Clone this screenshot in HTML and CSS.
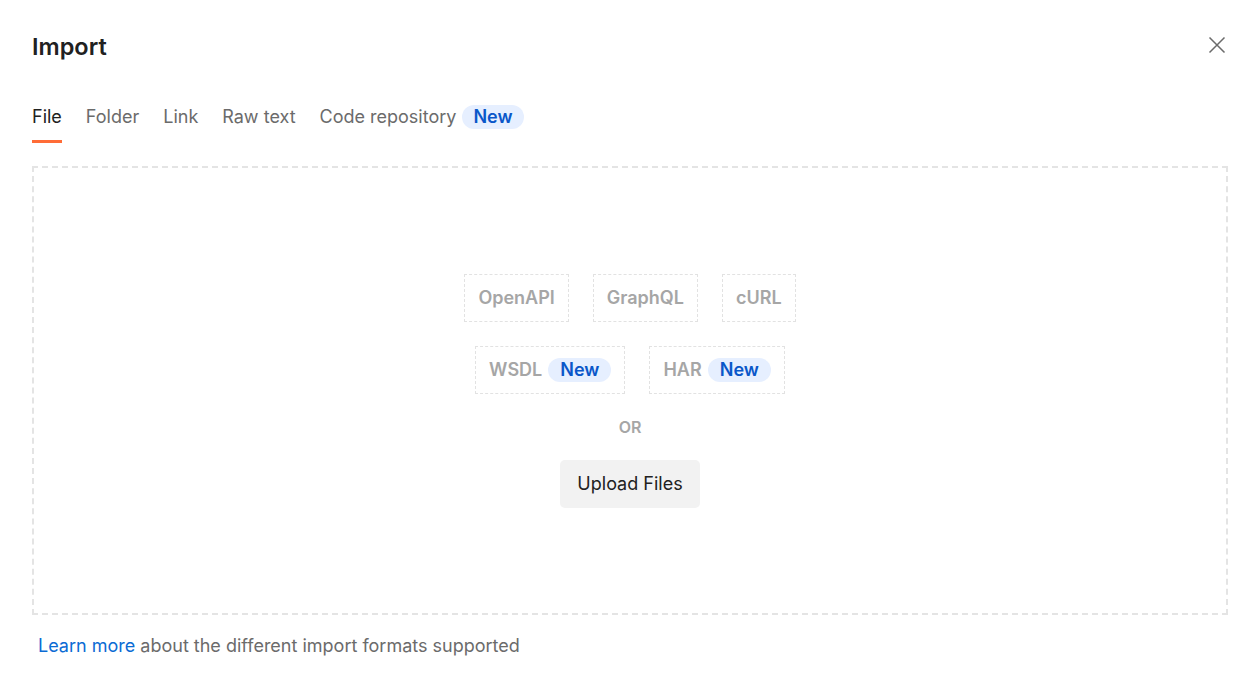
FILE: index.html
```html
<!DOCTYPE html>
<html>
<head>
<meta charset="utf-8">
<link rel="stylesheet" href="styles.css">
</head>
<body>
<div class="modal">
  <div class="header">
    <h1 class="title">Import</h1>
    <button class="close" aria-label="Close">
      <svg width="18" height="18" viewBox="0 0 18 18"><path d="M1.5 1.5L16.5 16.5M16.5 1.5L1.5 16.5" stroke="#6b6b6b" stroke-width="1.5" fill="none"/></svg>
    </button>
  </div>
  <div class="tabs">
    <div class="tab active">File</div>
    <div class="tab">Folder</div>
    <div class="tab">Link</div>
    <div class="tab">Raw text</div>
    <div class="tab">Code repository <span class="badge">New</span></div>
  </div>
  <div class="dropzone">
    <div class="formats">
      <div class="row">
        <div class="fmt">OpenAPI</div>
        <div class="fmt">GraphQL</div>
        <div class="fmt">cURL</div>
      </div>
      <div class="row">
        <div class="fmt">WSDL <span class="badge">New</span></div>
        <div class="fmt">HAR <span class="badge">New</span></div>
      </div>
    </div>
    <div class="or">OR</div>
    <button class="upload">Upload Files</button>
  </div>
  <p class="footer"><a class="link" href="#">Learn more</a> about the different import formats supported</p>
</div>
</body>
</html>
```

FILE: styles.css
```css
html, body {
  margin: 0;
  padding: 0;
  background: #ffffff;
}
body {
  font-family: Inter, "Noto Sans", sans-serif;
  color: #212121;
}
.modal {
  padding: 31px 29px 0 32px;
}
.header {
  display: flex;
  justify-content: space-between;
  align-items: flex-start;
}
.title {
  margin: 0;
  font-size: 23.5px;
  font-weight: 600;
  line-height: 32px;
  color: #212121;
}
.close {
  border: none;
  background: none;
  padding: 0;
  margin-top: 5px;
  margin-right: 2px;
  width: 18px;
  height: 18px;
  cursor: pointer;
}
.tabs {
  display: flex;
  align-items: center;
  gap: 24px;
  margin-top: 42px;
}
.tab {
  font-size: 18px;
  color: #6b6b6b;
  line-height: 24px;
  padding-bottom: 11px;
  border-bottom: 3px solid transparent;
  display: flex;
  align-items: center;
  gap: 6px;
}
.tab.active {
  color: #212121;
  border-bottom-color: #ff6c37;
}
.badge {
  display: inline-block;
  background: #e6efff;
  color: #0a57c9;
  font-weight: 600;
  font-size: 18px;
  line-height: 24px;
  padding: 0 11px;
  border-radius: 12px;
}
.fmt .badge {
  padding: 0 12px;
}
.dropzone {
  margin-top: 23px;
  height: 445px;
  border: 2px dashed #e4e4e4;
  display: flex;
  flex-direction: column;
  align-items: center;
  justify-content: center;
}
.formats {
  display: flex;
  flex-direction: column;
  align-items: center;
  gap: 24px;
}
.row {
  display: flex;
  gap: 24px;
}
.fmt {
  height: 46px;
  border: 1px dashed #e2e2e2;
  padding: 0 13px;
  display: flex;
  align-items: center;
  gap: 6px;
  font-size: 18px;
  font-weight: 600;
  color: #a6a6a6;
}
.or {
  margin-top: 22px;
  font-size: 16px;
  font-weight: 600;
  color: #a6a6a6;
  line-height: 22px;
}
.upload {
  margin-top: 22px;
  width: 140px;
  height: 48px;
  border: none;
  border-radius: 5px;
  background: #f2f2f2;
  color: #212121;
  font-family: Inter, "Noto Sans", sans-serif;
  font-size: 18px;
}
.footer {
  margin: 19px 0 0 6px;
  font-size: 18px;
  line-height: 24px;
  color: #6b6b6b;
}
.link {
  color: #0b6bd4;
  text-decoration: none;
}
```
